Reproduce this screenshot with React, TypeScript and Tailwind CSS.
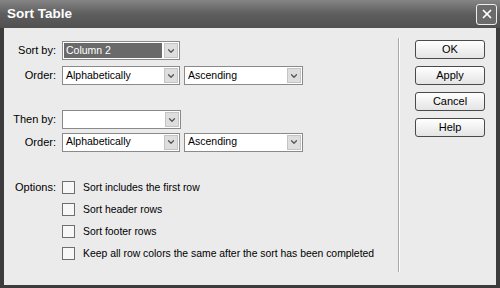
import { ChevronDown, X } from 'lucide-react';

const font = { fontFamily: '"Liberation Sans", Arial, sans-serif' };

function Select({ value, width, selected }: { value: string; width: string; selected?: boolean }) {
  return (
    <div className={`${width} h-[19px] border border-[#8a8a8a] bg-white flex items-center p-[1px]`}>
      <div
        className={`flex-1 h-full flex items-center pl-[2px] text-[10.5px] ${
          selected ? 'bg-[#6a6a6a] text-white mr-[2px]' : 'text-black'
        }`}
      >
        {value}
      </div>
      <div className="w-[14px] h-full bg-[#dedede] border border-[#c4c4c4] flex items-center justify-center">
        <ChevronDown className="w-[10px] h-[10px] text-[#555]" strokeWidth={3} />
      </div>
    </div>
  );
}

function Check({ label }: { label: string }) {
  return (
    <div className="flex items-center gap-[8px] h-[13px]">
      <div className="w-[13px] h-[13px] border border-[#6e6e6e] bg-[#f7f7f7]" />
      <span className="text-[10.4px] text-black">{label}</span>
    </div>
  );
}

function Btn({ label }: { label: string }) {
  return (
    <div className="w-[70px] h-[19px] rounded-[3px] border border-[#4a4a4a] bg-gradient-to-b from-white to-[#e4e4e4] flex items-center justify-center text-[11px] text-black">
      {label}
    </div>
  );
}

export default function App() {
  return (
    <div className="w-[500px] h-[288px] bg-[#3c3c3c] flex flex-col" style={font}>
      {/* Title bar */}
      <div className="h-[28px] flex items-center justify-between pl-[7px] pr-[3px] bg-gradient-to-b from-[#858585] via-[#5e5e5e] to-[#505050]">
        <span className="text-white font-bold text-[13.5px]">Sort Table</span>
        <div className="w-[21px] h-[21px] rounded-[3px] border border-[#eee] bg-[#6b6b6b] flex items-center justify-center">
          <X className="w-[14px] h-[14px] text-white" strokeWidth={3} />
        </div>
      </div>

      {/* Body */}
      <div className="flex-1 mx-[4px] mb-[3px] bg-[#ebebeb] flex">
        <div className="w-[394px] pt-[13px] text-[11px] text-black">
          <div className="flex items-center h-[19px]">
            <span className="w-[53px] text-right pr-[1px]">Sort by:</span>
            <div className="ml-[5px]">
              <Select value="Column 2" width="w-[118px]" selected />
            </div>
          </div>
          <div className="flex items-center h-[19px] mt-[6px]">
            <span className="w-[53px] text-right pr-[1px]">Order:</span>
            <div className="ml-[5px] flex gap-[4px]">
              <Select value="Alphabetically" width="w-[118px]" />
              <Select value="Ascending" width="w-[119px]" />
            </div>
          </div>

          <div className="flex items-center h-[19px] mt-[25px]">
            <span className="w-[53px] text-right pr-[1px]">Then by:</span>
            <div className="ml-[5px]">
              <Select value="" width="w-[119px]" />
            </div>
          </div>
          <div className="flex items-center h-[20px] mt-[3px]">
            <span className="w-[53px] text-right pr-[1px]">Order:</span>
            <div className="ml-[5px] flex gap-[4px]">
              <Select value="Alphabetically" width="w-[118px]" />
              <Select value="Ascending" width="w-[119px]" />
            </div>
          </div>

          <div className="flex mt-[29px]">
            <span className="w-[53px] text-right pr-[1px] leading-[13px]">Options:</span>
            <div className="ml-[5px] flex flex-col gap-[9px]">
              <Check label="Sort includes the first row" />
              <Check label="Sort header rows" />
              <Check label="Sort footer rows" />
              <Check label="Keep all row colors the same after the sort has been completed" />
            </div>
          </div>
        </div>

        {/* Separator */}
        <div className="mt-[10px] mb-[13px] w-[2px] border-l border-[#a8a8a8] border-r border-r-white" />

        {/* Buttons */}
        <div className="pl-[15px] pt-[12px] flex flex-col gap-[7px]">
          <Btn label="OK" />
          <Btn label="Apply" />
          <Btn label="Cancel" />
          <Btn label="Help" />
        </div>
      </div>
    </div>
  );
}
